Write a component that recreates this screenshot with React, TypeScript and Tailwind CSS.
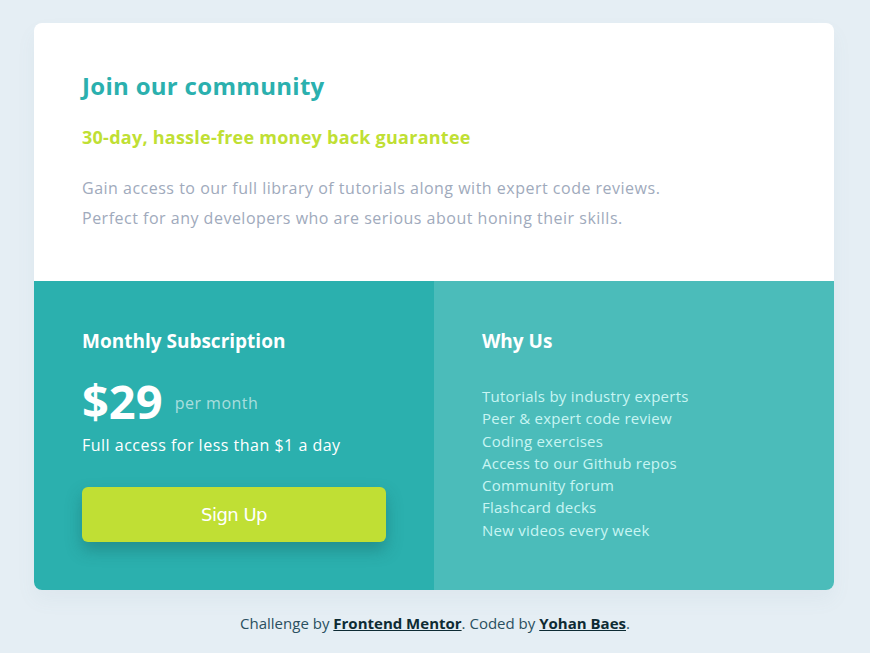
const features = [
  'Tutorials by industry experts',
  'Peer & expert code review',
  'Coding exercises',
  'Access to our Github repos',
  'Community forum',
  'Flashcard decks',
  'New videos every week',
];

export default function App() {
  return (
    <div className="min-h-[653px] bg-[#e5eef4] pt-[23px] font-['Open_Sans',sans-serif]">
      <main className="mx-auto w-[800px] -translate-x-px overflow-hidden rounded-lg bg-white shadow-[0_10px_20px_rgba(100,130,160,0.06)]">
        <section className="px-12 pt-12 pb-12">
          <h1 className="text-[24px] leading-[30px] font-bold tracking-[0.3px] text-[#2bb0ae]">Join our community</h1>
          <h2 className="mt-6 text-[18px] leading-[24px] font-bold tracking-[0.25px] text-[#c0df34]">30-day, hassle-free money back guarantee</h2>
          <p className="mt-6 text-[16px] leading-[30px] tracking-[0.5px] text-[#a0aabc]">
            Gain access to our full library of tutorials along with expert code reviews.
            <br />
            Perfect for any developers who are serious about honing their skills.
          </p>
        </section>

        <div className="grid grid-cols-2">
          <section className="bg-[#2bb0ae] px-12 pt-[46px] pb-12 text-white">
            <h3 className="text-[19px] leading-[28px] font-bold">Monthly Subscription</h3>
            <div className="mt-[20px] flex h-[52px] items-center gap-3">
              <span className="text-[47px] leading-[52px] font-bold">$29</span>
              <span className="mt-1 text-[16px] tracking-[0.5px] text-white/60">per month</span>
            </div>
            <p className="mt-[6px] text-[16px] leading-[24px] tracking-[0.5px]">Full access for less than $1 a day</p>
            <button className="mt-[30px] h-[55px] w-[304px] rounded-md bg-[#c0df34] font-['DejaVu_Sans',sans-serif] text-[18px] tracking-[-0.5px] text-white shadow-[0_8px_16px_rgba(20,80,80,0.35)]">
              Sign Up
            </button>
          </section>

          <section className="bg-[#4bbcba] px-12 pt-[46px] pb-12 text-white">
            <h3 className="text-[19px] leading-[28px] font-bold">Why Us</h3>
            <ul className="mt-[30px] text-[15px] leading-[22.3px] tracking-[0.25px] text-[#c8f5f3]">
              {features.map((f) => (
                <li key={f}>{f}</li>
              ))}
            </ul>
          </section>
        </div>
      </main>

      <footer className="mt-[21px] pb-4 text-center text-[15px] leading-[24px] text-[#2a5060]">
        Challenge by{' '}
        <a href="#" className="font-bold text-[#0e2b33] underline">Frontend Mentor</a>. Coded by{' '}
        <a href="#" className="font-bold text-[#0e2b33] underline">Yohan Baes</a>.
      </footer>
    </div>
  );
}
